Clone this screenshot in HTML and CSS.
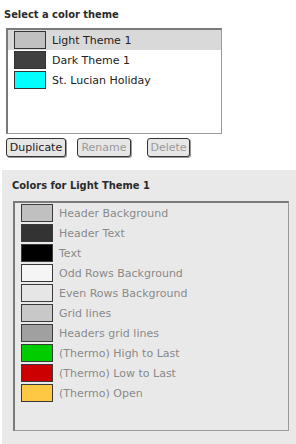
FILE: index.html
```html
<!DOCTYPE html>
<html>
<head>
    <title>Color themes</title>
    <link rel="stylesheet" href="styles.css">
</head>
<body>
    <h1 class="title">Select a color theme</h1>
    <div class="theme-list">
        <div class="row selected"><span class="swatch" style="background:#c0c0c0"></span>Light Theme 1</div>
        <div class="row"><span class="swatch" style="background:#404040"></span>Dark Theme 1</div>
        <div class="row"><span class="swatch" style="background:#00ffff"></span>St. Lucian Holiday</div>
    </div>
    <div class="buttons">
        <button class="btn btn-dup">Duplicate</button>
        <button class="btn btn-ren" disabled>Rename</button>
        <button class="btn btn-del" disabled>Delete</button>
    </div>

    <div class="panel">
        <h2 class="title panel-title">Colors for Light Theme 1</h2>
        <div class="color-list">
            <div class="row"><span class="swatch" style="background:#c0c0c0"></span>Header Background</div>
            <div class="row"><span class="swatch" style="background:#333333"></span>Header Text</div>
            <div class="row"><span class="swatch" style="background:#000000"></span>Text</div>
            <div class="row"><span class="swatch" style="background:#f5f5f5"></span>Odd Rows Background</div>
            <div class="row"><span class="swatch" style="background:#e6e6e6"></span>Even Rows Background</div>
            <div class="row"><span class="swatch" style="background:#c8c8c8"></span>Grid lines</div>
            <div class="row"><span class="swatch" style="background:#a0a0a0"></span>Headers grid lines</div>
            <div class="row"><span class="swatch" style="background:#00cc00"></span>(Thermo) High to Last</div>
            <div class="row"><span class="swatch" style="background:#cc0000"></span>(Thermo) Low to Last</div>
            <div class="row"><span class="swatch" style="background:#ffc844"></span>(Thermo) Open</div>
        </div>
    </div>
</body>
</html>
```

FILE: styles.css
```css
body {
    margin: 0;
    font-family: "DejaVu Sans", Verdana, sans-serif;
    font-size: 11px;
    color: #222;
    background: #fff;
}
.title {
    margin: 0;
    padding: 8px 0 0 4px;
    height: 20px;
    box-sizing: border-box;
    font-family: "DejaVu Sans Condensed", "DejaVu Sans", sans-serif;
    font-size: 11px;
    font-weight: bold;
    color: #2a2a2a;
}
.theme-list {
    margin: 8px 0 0 6px;
    width: 216px;
    height: 106px;
    box-sizing: border-box;
    border: 1px solid #9a9a9a;
    border-left: 2px solid #7a7a7a;
    border-top: 2px solid #7a7a7a;
    background: #fff;
}
.row {
    display: flex;
    align-items: center;
    height: 20px;
    padding-left: 6px;
    white-space: nowrap;
}
.row.selected { background-color: #d9d9d9; }
.swatch {
    width: 32px;
    height: 18px;
    box-sizing: border-box;
    border: 1px solid #333;
    margin-right: 6px;
    flex: none;
}
.buttons {
    display: flex;
    margin: 4px 0 0 6px;
    height: 19px;
}
.btn {
    height: 19px;
    padding: 0;
    font-family: inherit;
    font-size: 11px;
    color: #222;
    background: #e6e6e6;
    border: 1px solid #333;
    border-radius: 3px;
    box-shadow: 1px 1px 0 #9a9a9a;
}
.btn:disabled { color: #9a9a9a; }
.btn-dup { width: 60px; }
.btn-ren { width: 54px; margin-left: 11px; }
.btn-del { width: 43px; margin-left: 16px; }
.panel {
    margin: 13px 0 0 2px;
    height: 274px;
    background: #e9e9e9;
    padding-top: 1px;
    box-sizing: border-box;
}
.panel-title {
    padding: 8px 0 0 10px;
    height: 30px;
}
.color-list {
    margin-left: 11px;
    width: 276px;
    height: 230px;
    box-sizing: border-box;
    border: 1px solid #9a9a9a;
    border-left: 2px solid #7a7a7a;
    border-top: 2px solid #7a7a7a;
    color: #8a8a8a;
}
.color-list .swatch { border-color: #3a3a3a; }
```
